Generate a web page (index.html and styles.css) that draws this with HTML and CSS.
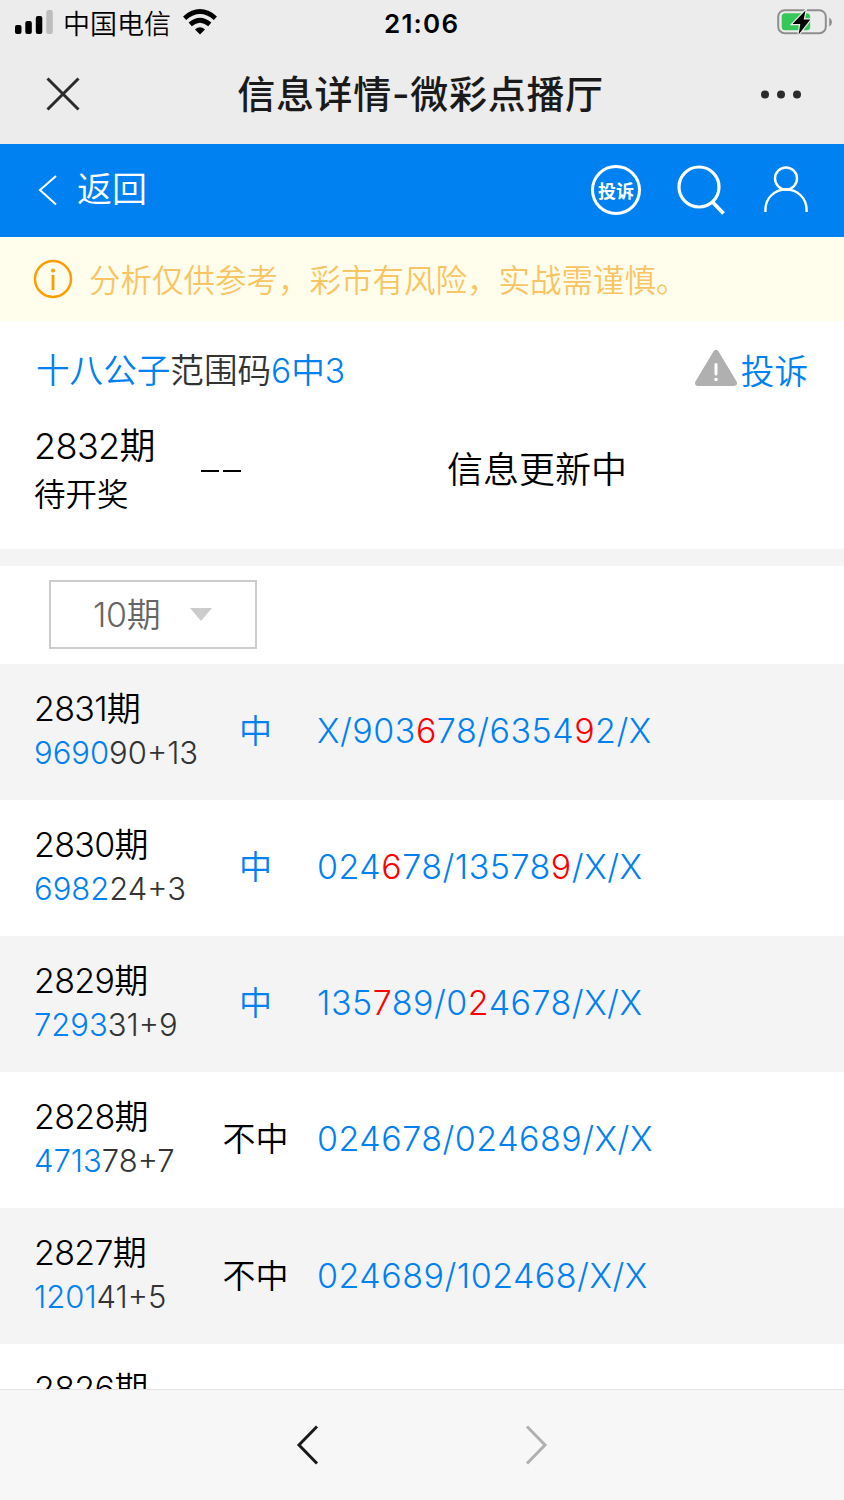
FILE: index.html
```
<!DOCTYPE html>
<html lang="zh-CN">
<head>
    <meta charset="UTF-8">
    <meta name="viewport" content="width=device-width, initial-scale=1.0">
    <title>信息详情-微彩点播厅</title>
    <link rel="stylesheet" href="styles.css">
</head>
<body>
    <div class="page">
        <div class="status-bar">
            <svg class="signal" width="40" height="26" viewBox="0 0 40 26">
                <rect x="1" y="16" width="6.500" height="9" rx="2"/>
                <rect x="11.300" y="12" width="6.500" height="13" rx="2"/>
                <rect x="21.800" y="7" width="6.500" height="18" rx="2"/>
                <rect x="32.300" y="1" width="6.500" height="24" rx="2" fill="#bdbdbd"/>
            </svg>
            <span class="carrier">中国电信</span>
            <svg class="wifi" width="34" height="26" viewBox="0 0 34 26">
                <g fill="none" stroke="#000" stroke-width="4.800">
                    <path d="M1.6 9.2Q17-4 32.4 9.2"/>
                    <path d="M7.2 15.4Q17 7 26.8 15.4"/>
                </g>
                <path d="M12 20.500Q17 16 22 20.500L17 25.5Z"/>
            </svg>
            <span class="time">21:06</span>
            <svg class="battery" width="56" height="28" viewBox="0 0 56 28">
                <rect x="1.2" y="2.2" width="47.6" height="23" rx="6.5" fill="none" stroke="#8e8e8e" stroke-width="2"/>
                <path d="M52.2 9.5Q55 11 55 14Q55 17 52.2 18.500Z" fill="#8e8e8e"/>
                <rect x="4.700" y="5.200" width="28.500" height="17" rx="3.500" fill="#35c759"/>
                <path d="M28.500 2.500L15.500 16H23.300L21.600 26.500L33.300 11.500H26.700Z" fill="#000" stroke="#ececec" stroke-width="2.4" paint-order="stroke"/>
            </svg>
        </div>

        <div class="title-bar">
            <svg width="34" height="34" viewBox="0 0 34 34" fill="none" stroke="#2b2b2b" stroke-width="3">
                <path d="M1.500 1.500L32.500 32.500M32.500 1.500L1.500 32.500"/>
            </svg>
            <h1>信息详情-微彩点播厅</h1>
            <svg width="40" height="10" viewBox="0 0 40 10" fill="#2b2b2b">
                <circle cx="4" cy="5.500" r="4"/>
                <circle cx="20" cy="5.500" r="4"/>
                <circle cx="36" cy="5.500" r="4"/>
            </svg>
        </div>

        <div class="header">
            <a class="back">
                <svg width="20" height="32" viewBox="0 0 20 32" fill="none" stroke="#fff" stroke-width="2">
                    <path d="M18 1L2 15L18 29.500"/>
                </svg>
                <span>返回</span>
            </a>
            <div class="header-icons">
                <span class="badge">投诉</span>
                <svg class="search" width="50" height="52" viewBox="0 0 50 52" fill="none" stroke="#fff" stroke-width="3.200">
                    <circle cx="22" cy="23" r="20"/>
                    <path d="M35.500 38L46.500 49.500" stroke-width="3.800"/>
                </svg>
                <svg class="user" width="44" height="48" viewBox="0 0 44 48" fill="none" stroke="#fff" stroke-width="2.400">
                    <circle cx="22" cy="13.500" r="11"/>
                    <path d="M1.400 47V45C1.400 33 10.500 24.500 22 24.500S42.600 33 42.600 45V47"/>
                </svg>
            </div>
        </div>

        <div class="notice">
            <svg width="40" height="40" viewBox="0 0 40 40">
                <circle cx="20" cy="20" r="18" fill="none" stroke="#ff9c00" stroke-width="2.500"/>
                <circle cx="20" cy="11.500" r="2" fill="#ff9c00"/>
                <path d="M20 16V31" stroke="#ff9c00" stroke-width="2.800"/>
            </svg>
            <span>分析仅供参考，彩市有风险，实战需谨慎。</span>
        </div>

        <div class="current">
            <div class="plan">
                <div class="plan-name"><span class="blue">十八公子</span>范围码<span class="blue">6中3</span></div>
                <a class="complain">
                    <svg width="44" height="38" viewBox="0 0 44 38">
                        <path d="M22 4L40 34H4Z" fill="#b0b0b0" stroke="#b0b0b0" stroke-width="6" stroke-linejoin="round"/>
                        <path d="M22 15.500V25" stroke="#fff" stroke-width="3" stroke-linecap="round"/>
                        <circle cx="22" cy="30.500" r="1.800" fill="#fff"/>
                    </svg>
                    <span>投诉</span>
                </a>
            </div>
            <div class="pending">
                <div class="pending-issue">
                    <div class="pending-no">2832期</div>
                    <div class="pending-text">待开奖</div>
                </div>
                <div class="pending-mark"><i></i><i></i></div>
                <div class="pending-info">信息更新中</div>
            </div>
        </div>

        <div class="filter">
            <div class="select">
                <span>10期</span>
                <i class="arrow"></i>
            </div>
        </div>

        <div class="list">
            <div class="row">
                <div class="issue">
                    <div class="no">2831期</div>
                    <div class="draw"><span class="blue">9690</span>90+13</div>
                </div>
                <div class="hit blue">中</div>
                <div class="code">X/903<em>6</em>78/6354<em>9</em>2/X</div>
            </div>
            <div class="row">
                <div class="issue">
                    <div class="no">2830期</div>
                    <div class="draw"><span class="blue">6982</span>24+3</div>
                </div>
                <div class="hit blue">中</div>
                <div class="code">024<em>6</em>78/13578<em>9</em>/X/X</div>
            </div>
            <div class="row">
                <div class="issue">
                    <div class="no">2829期</div>
                    <div class="draw"><span class="blue">7293</span>31+9</div>
                </div>
                <div class="hit blue">中</div>
                <div class="code">135<em>7</em>89/0<em>2</em>4678/X/X</div>
            </div>
            <div class="row">
                <div class="issue">
                    <div class="no">2828期</div>
                    <div class="draw"><span class="blue">4713</span>78+7</div>
                </div>
                <div class="hit">不中</div>
                <div class="code">024678/024689/X/X</div>
            </div>
            <div class="row">
                <div class="issue">
                    <div class="no">2827期</div>
                    <div class="draw"><span class="blue">1201</span>41+5</div>
                </div>
                <div class="hit">不中</div>
                <div class="code">024689/102468/X/X</div>
            </div>
            <div class="row">
                <div class="issue">
                    <div class="no">2826期</div>
                </div>
            </div>
        </div>

        <div class="toolbar">
            <svg width="24" height="42" viewBox="0 0 24 42" fill="none" stroke="#1a1a1a" stroke-width="3">
                <path d="M21 2.500L3 21L21 39.500"/>
            </svg>
            <svg width="24" height="42" viewBox="0 0 24 42" fill="none" stroke="#b0b0b0" stroke-width="3">
                <path d="M3 2.500L21 21L3 39.500"/>
            </svg>
        </div>
    </div>
</body>
</html>
```
FILE: styles.css
```
* {
    box-sizing: border-box;
}
body {
    margin: 0;
    font-family: Inter, "Noto Sans CJK SC", sans-serif;
    font-weight: 350;
    color: #000;
    background: #fff;
}
.page {
    display: flex;
    flex-direction: column;
    width: 844px;
    height: 1500px;
    overflow: hidden;
}
.page > div {
    flex-shrink: 0;
}
.blue {
    color: #0081f1;
}
.status-bar {
    display: flex;
    align-items: center;
    height: 46px;
    padding: 0 12px 0 14px;
    background: #ececec;
}
.signal {
    margin-top: -2px;
}
.carrier {
    width: 119px;
    padding: 3px 0 0 9px;
    font-size: 27px;
    line-height: 46px;
    white-space: nowrap;
}
.wifi {
    margin: -2px 0 0 10px;
}
.time {
    margin-left: 167px;
    font-size: 26px;
    font-weight: 600;
    letter-spacing: 1.2px;
}
.battery {
    margin: -2px -1px 0 auto;
}
.title-bar {
    display: flex;
    align-items: center;
    justify-content: space-between;
    height: 98px;
    padding: 0 43px 2px 46px;
    background: #ececec;
}
.title-bar h1 {
    margin: 0;
    padding-bottom: 5px;
    font-size: 38px;
    font-weight: 500;
    letter-spacing: 0.7px;
    color: #1a1a1a;
}
.header {
    display: flex;
    align-items: center;
    justify-content: space-between;
    height: 93px;
    padding: 0 36px 0 38px;
    background: #0081f1;
    color: #fff;
}
.back {
    display: flex;
    align-items: center;
    gap: 19px;
    font-size: 35px;
    line-height: 93px;
}
.back span {
    margin-top: -2px;
}
.header-icons {
    display: flex;
    align-items: center;
    padding: 0 1px 2px 0;
}
.badge {
    display: flex;
    align-items: center;
    justify-content: center;
    width: 50px;
    height: 50px;
    border: 3px solid #fff;
    border-radius: 50%;
    font-size: 18px;
    font-weight: 700;
}
.search {
    margin: 0 37px 0 36px;
}
.user {
    margin: -2px -1px 0 0;
}
.notice {
    display: flex;
    align-items: center;
    gap: 16px;
    height: 84px;
    padding-left: 33px;
    background: #fffeec;
    color: #f9c462;
    font-size: 31.5px;
}
.notice span {
    margin-top: -3px;
}
.current {
    height: 228px;
    padding: 22px 36px 0;
}
.plan {
    display: flex;
    justify-content: space-between;
    height: 54px;
    font-size: 33.6px;
    line-height: 56px;
}
.plan-name {
    color: #333;
}
.complain {
    display: flex;
    align-items: center;
    gap: 3px;
    color: #0081f1;
}
.complain svg {
    margin-top: -5px;
}
.complain span {
    padding-top: 3px;
}
.pending {
    display: flex;
    align-items: center;
    height: 100px;
    margin-top: 23px;
    margin-left: -2px;
}
.pending-issue {
    width: 167px;
}
.pending-no {
    font-size: 36px;
    line-height: 50px;
    letter-spacing: -0.6px;
}
.pending-text {
    font-size: 31.5px;
    line-height: 48px;
}
.pending-mark {
    display: flex;
    gap: 4px;
    width: 246px;
}
.pending-mark i {
    width: 18px;
    height: 2px;
    margin-top: 2px;
    background: #000;
}
.pending-info {
    margin-top: -6px;
    font-size: 36px;
}
.filter {
    height: 114.6px;
    border-top: 17px solid #f4f4f4;
    padding: 14px 49px;
}
.select {
    display: flex;
    align-items: center;
    width: 208px;
    height: 69px;
    padding-left: 42px;
    border: 2px solid #ccc;
    font-size: 34px;
    letter-spacing: -0.3px;
    color: #666;
}
.select span {
    margin-top: -5px;
}
.arrow {
    margin-left: 30px;
    border: 11px solid transparent;
    border-top: 13px solid #ccc;
    border-bottom: 0;
}
.page > .list {
    flex: 1 1 0;
    overflow: hidden;
}
.row {
    display: flex;
    align-items: center;
    height: 136.1px;
    padding: 0 34px;
}
.row:nth-child(odd) {
    background: #f4f4f4;
}
.issue {
    width: 182px;
    height: 90px;
}
.no {
    font-size: 34px;
    line-height: 44px;
    letter-spacing: -0.7px;
}
.draw {
    font-size: 31px;
    line-height: 44px;
    color: #333;
}
.hit {
    width: 79px;
    padding-bottom: 5px;
    font-size: 33px;
    text-align: center;
}
.code {
    margin-left: 22px;
    padding-bottom: 2px;
    font-size: 34px;
    letter-spacing: 0.5px;
    color: #0081f1;
}
.code em {
    font-style: normal;
    color: #f00;
}
.toolbar {
    display: flex;
    justify-content: center;
    align-items: center;
    gap: 204px;
    height: 111px;
    border-top: 1px solid #e3e3e3;
    background: #f7f7f7;
}
```
